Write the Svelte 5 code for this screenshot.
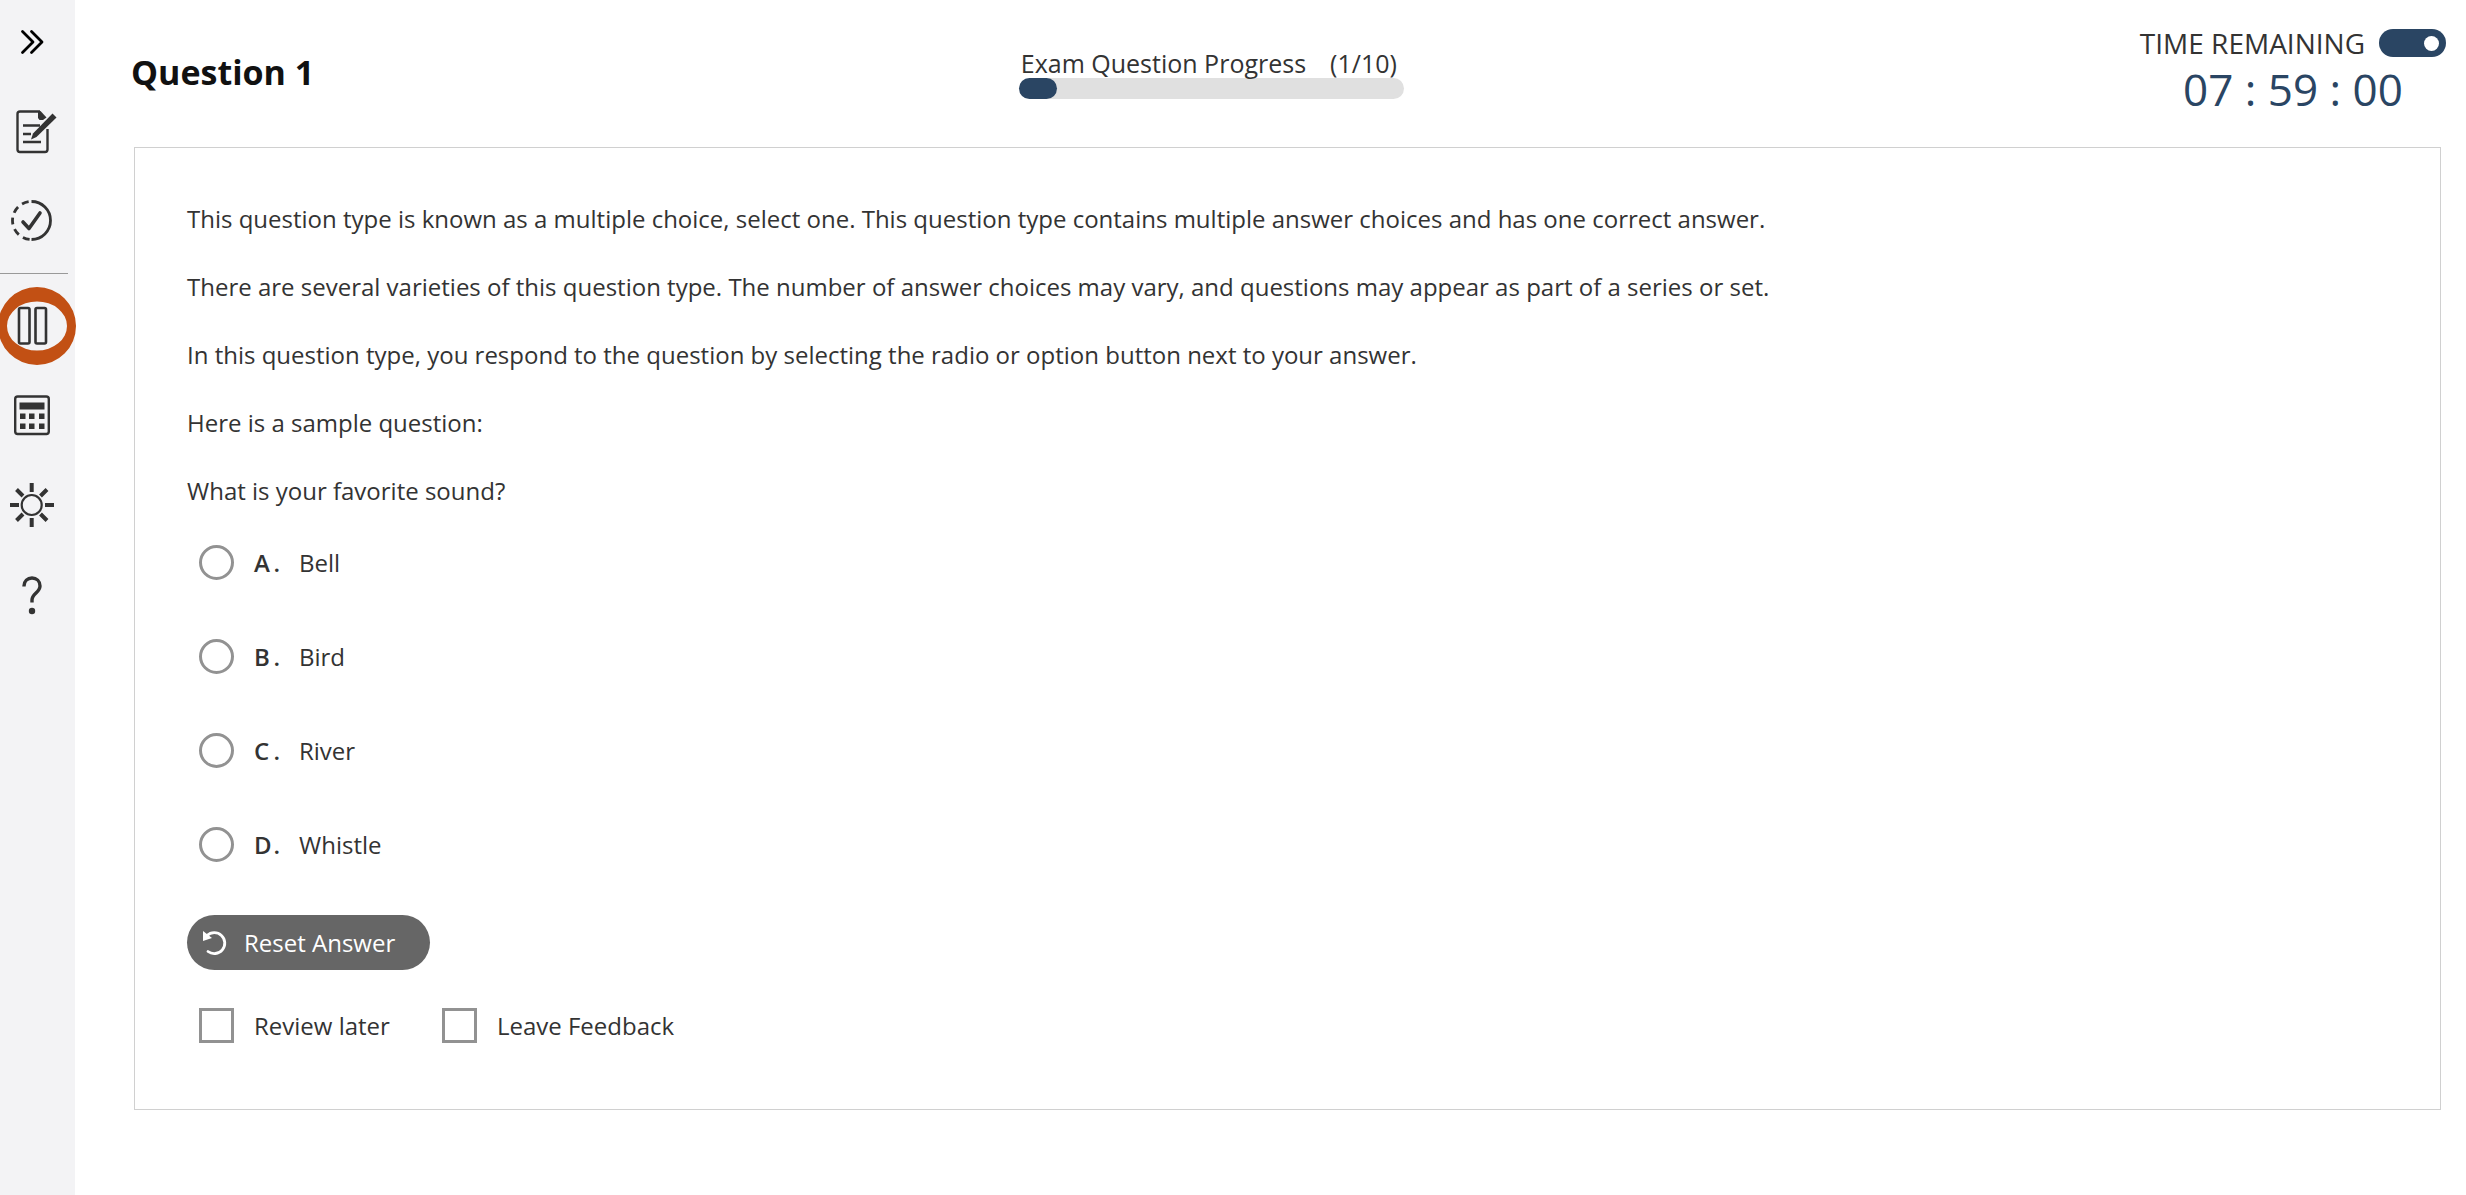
<script lang="ts">
	const questionNumber = 1;
	const totalQuestions = 10;

	const paragraphs = [
		'This question type is known as a multiple choice, select one. This question type contains multiple answer choices and has one correct answer.',
		'There are several varieties of this question type. The number of answer choices may vary, and questions may appear as part of a series or set.',
		'In this question type, you respond to the question by selecting the radio or option button next to your answer.',
		'Here is a sample question:',
		'What is your favorite sound?'
	];

	const choices = [
		{ key: 'A', text: 'Bell' },
		{ key: 'B', text: 'Bird' },
		{ key: 'C', text: 'River' },
		{ key: 'D', text: 'Whistle' }
	];

	let answer: string | null = $state(null);
	let showTime = $state(true);
	let reviewLater = $state(false);
	let leaveFeedback = $state(false);

	let progress = $derived((questionNumber / totalQuestions) * 100);

	function resetAnswer() {
		answer = null;
	}
</script>

<div class="exam">
	<nav class="sidebar" aria-label="Exam tools">
		<div class="tools">
			<button class="tool" aria-label="Expand menu">
				<svg viewBox="0 0 50 50" fill="none" stroke="#000" stroke-width="2.8" stroke-linecap="round" stroke-linejoin="round">
					<path d="M15.5 14.5 26 25 15.5 35.5M24.5 14.5 35 25 24.5 35.5" />
				</svg>
			</button>
			<button class="tool" aria-label="Notes">
				<svg viewBox="0 0 50 50" fill="none" stroke="#333" stroke-width="2.4">
					<path d="M33 4.5H13a2.5 2.5 0 0 0-2.5 2.5v35.5a2.5 2.5 0 0 0 2.5 2.5h25a2.5 2.5 0 0 0 2.5-2.5V22" />
					<path d="M31 4h2.5l6 6.5L36 13h-3.5L31 11z" fill="#333" stroke="none" />
					<path d="M16 18.5h17M16 27h8M16 35h18" />
					<path d="M45.5 6.500 49.500 10.500 29.500 30 24 32.500 26 26.500z" fill="#333" stroke="none" />
				</svg>
			</button>
			<button class="tool" aria-label="Review progress">
				<svg viewBox="0 0 50 50" fill="none" stroke="#333" stroke-width="2.8">
					<path d="M24.5 4.500a19 19 0 0 1 0 38" />
					<path d="M24.5 4.500a19 19 0 0 0 0 38" pathLength="60" stroke-dasharray="7 5" stroke-dashoffset="-3" />
					<path d="M16 25l6 6.5L33 16" stroke-width="3.6" stroke-linecap="round" stroke-linejoin="round" />
				</svg>
			</button>
		</div>
		<div class="tools">
			<button class="tool" aria-label="Pause">
				<svg class="ring" viewBox="0 0 78 78">
					<path fill="#c25014" fill-rule="evenodd" d="M0 39a39 39 0 1 1 78 0 39 39 0 1 1-78 0zM9 39a30 24.5 0 1 0 60 0 30 24.5 0 1 0-60 0z" />
				</svg>
				<svg viewBox="0 0 50 50" fill="none" stroke="#333" stroke-width="2.6">
					<rect x="12" y="7" width="10.5" height="35.5" rx="1.5" />
					<rect x="28.5" y="7" width="10.5" height="35.5" rx="1.5" />
				</svg>
			</button>
			<button class="tool" aria-label="Calculator">
				<svg viewBox="0 0 50 50">
					<rect x="8.2" y="5.5" width="33.6" height="37.5" rx="2.5" fill="none" stroke="#333" stroke-width="2.4" />
					<path fill="#333" d="M12.5 11.5h25v7h-25zM13 22.500h5.500V28H13zM22 22.500h5.500V28H22zM32 22.500h5.500V28H32zM13 32.500h5.500V38H13zM22 32.500h5.500V38H22zM32 32.500h5.500V38H32z" />
				</svg>
			</button>
			<button class="tool" aria-label="Brightness">
				<svg viewBox="0 0 50 50" fill="none" stroke="#333">
					<circle cx="24.7" cy="24" r="10" stroke-width="2.2" />
					<path d="M24.7 2v9M24.7 37v9M3 24h9M38 24h9M9.500 8.500l6.500 6.500M40 8.500 33.500 15M9.500 39.500 16 33M40 39.500 33.500 33" stroke-width="4" />
				</svg>
			</button>
			<button class="tool" aria-label="Help">
				<svg viewBox="0 0 50 50" fill="none" stroke="#333" stroke-width="3.4">
					<path d="M17 15.500V15c0-5 3.500-8 8-8s8 3 8 8c0 6.500-8 7.500-8 14v2.500" />
					<circle cx="25" cy="40" r="3.200" fill="#333" stroke="none" />
				</svg>
			</button>
		</div>
	</nav>

	<main>
		<header>
			<h1>Question {questionNumber}</h1>

			<div class="progress">
				<div class="progress-label">
					<span>Exam Question Progress</span>
					<span>({questionNumber}/{totalQuestions})</span>
				</div>
				<div class="track" role="progressbar" aria-label="Exam Question Progress" aria-valuenow={questionNumber} aria-valuemin="0" aria-valuemax={totalQuestions}>
					<div class="fill" style="width: {progress}%"></div>
				</div>
			</div>

			<div class="timer">
				<label class="timer-label">
					TIME REMAINING
					<input type="checkbox" role="switch" class="toggle" bind:checked={showTime} />
				</label>
				{#if showTime}
					<div class="clock">07 : 59 : 00</div>
				{/if}
			</div>
		</header>

		<section class="card">
			{#each paragraphs as paragraph}
				<p>{paragraph}</p>
			{/each}

			<div class="choices" role="radiogroup" aria-label="Answer choices">
				{#each choices as choice}
					<label class="choice">
						<input type="radio" name="answer" value={choice.key} bind:group={answer} />
						<span class="key"><span>{choice.key}</span><span>.</span></span>
						<span>{choice.text}</span>
					</label>
				{/each}
			</div>

			<button class="reset" onclick={resetAnswer}>
				<svg viewBox="0 0 26 26" fill="none">
					<path d="M6 5.500A10.500 10.500 0 1 1 7 21.500" stroke="#fff" stroke-width="2.800" stroke-linecap="round" />
					<path d="M2 1v10l9-3z" fill="#fff" />
				</svg>
				Reset Answer
			</button>

			<div class="flags">
				<label>
					<input type="checkbox" bind:checked={reviewLater} />
					Review later
				</label>
				<label>
					<input type="checkbox" bind:checked={leaveFeedback} />
					Leave Feedback
				</label>
			</div>
		</section>
	</main>
</div>

<style>
	:global(body) {
		margin: 0;
		background: #fff;
	}

	.exam {
		display: flex;
		min-height: 100vh;
		font-family: 'Open Sans', 'Noto Sans', sans-serif;
		font-size: 24px;
		line-height: 34px;
		color: #333;
	}

	.sidebar {
		flex: none;
		width: 75px;
		background: #f3f3f5;
	}

	.tools {
		display: flex;
		flex-direction: column;
		gap: 40px;
		width: 61px;
		padding: 17px 0 26px 7px;
	}

	.tools + .tools {
		padding-top: 27px;
	}

	.tools:first-child {
		border-bottom: 1px solid #999;
	}

	.tool {
		position: relative;
		width: 50px;
		height: 50px;
		padding: 0;
		border: none;
		background: none;
		cursor: pointer;
	}

	.tool svg {
		display: block;
		width: 50px;
		height: 50px;
	}

	/* highlight drawn around the pause button */
	.tool .ring {
		position: absolute;
		top: -14px;
		left: -9px;
		width: 78px;
		height: 78px;
	}

	main {
		flex: 1;
		min-width: 0;
		padding: 24px 20px 84px 56px;
	}

	header {
		display: grid;
		grid-template-columns: 46fr 385px 54fr;
		height: 123px;
	}

	h1 {
		margin: 24px 0 0;
		font-size: 34px;
		line-height: 48px;
		font-weight: 700;
		color: #111;
	}

	.progress {
		padding-top: 24px;
	}

	.progress-label {
		display: flex;
		gap: 24px;
		font-size: 25px;
		line-height: 30px;
		padding-left: 2px;
		white-space: nowrap;
	}

	.track {
		height: 21px;
		border-radius: 12px;
		background: #e0e0e0;
	}

	.fill {
		height: 100%;
		border-radius: 12px;
		background: #2a4563;
	}

	.timer {
		justify-self: end;
		text-align: center;
	}

	.timer-label {
		display: flex;
		align-items: center;
		gap: 14px;
		height: 38px;
		font-size: 28px;
	}

	.toggle {
		appearance: none;
		display: flex;
		align-items: center;
		width: 67px;
		height: 28px;
		margin: 0;
		padding: 0 7px;
		border-radius: 14px;
		background: #929292;
		cursor: pointer;
	}

	.toggle::before {
		content: '';
		width: 15px;
		height: 15px;
		border-radius: 50%;
		background: #fff;
	}

	.toggle:checked {
		justify-content: flex-end;
		background: #2a4563;
	}

	.clock {
		font-size: 44px;
		line-height: 54px;
		color: #2a4563;
	}

	.card {
		margin: 0 5px 0 3px;
		padding: 54px 52px 66px;
		border: 1px solid #d0d0d0;
	}

	p {
		margin: 0 0 34px;
	}

	.choices {
		display: flex;
		flex-direction: column;
		gap: 59px;
		margin: 37px 0 53px;
	}

	.choice,
	.flags label {
		display: flex;
		align-items: center;
		cursor: pointer;
	}

	.choice input,
	.flags input {
		appearance: none;
		flex: none;
		width: 35px;
		height: 35px;
		margin: 0 20px 0 12px;
		border: 3px solid #929292;
		background: #fff;
		cursor: pointer;
	}

	.choice input {
		border-radius: 50%;
	}

	.choice input:checked,
	.flags input:checked {
		background: #2a4563;
		box-shadow: inset 0 0 0 5px #fff;
	}

	.key {
		display: flex;
		justify-content: space-between;
		width: 26px;
		margin-right: 19px;
		font-weight: 600;
	}

	.reset {
		display: flex;
		align-items: center;
		gap: 17px;
		height: 55px;
		padding: 0 35px 0 14px;
		border: none;
		border-radius: 28px;
		background: #666;
		color: #fff;
		font: inherit;
		cursor: pointer;
	}

	.reset svg {
		width: 26px;
		height: 26px;
	}

	.flags {
		display: flex;
		gap: 40px;
		margin-top: 38px;
	}
</style>
